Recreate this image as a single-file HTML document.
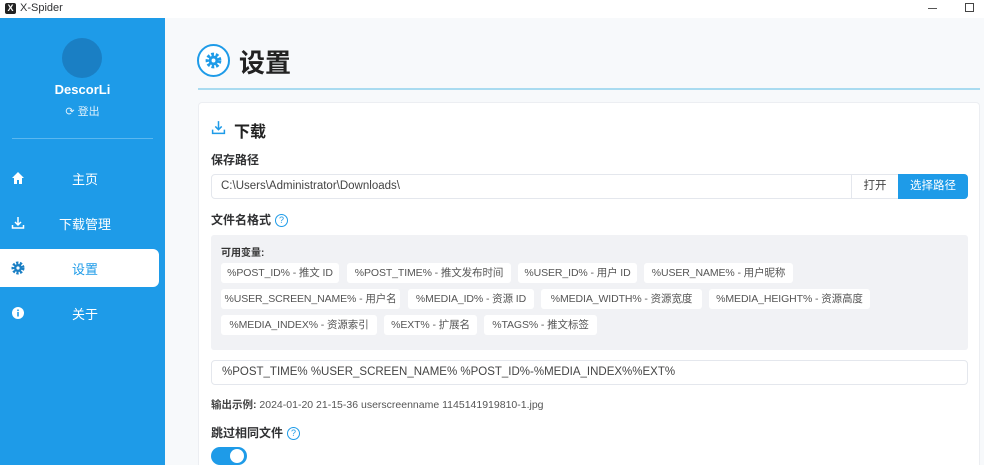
<!DOCTYPE html>
<html style="overflow:hidden;height:465px"><head><meta charset="utf-8"><style>
*{box-sizing:border-box;margin:0;padding:0}
body{width:984px;height:465px;overflow:hidden;background:#f7f9fb;font-family:"Liberation Sans","Noto Sans CJK SC",sans-serif;position:relative;color:#303133}
.abs{position:absolute}
.tb{left:0;top:0;width:984px;height:18px;background:#fff;font-size:11px}
.sb{left:0;top:18px;width:165px;height:447px;background:#1e9be8;color:#fff}
.nav{position:absolute;left:0;width:159px;height:38px;font-size:13px;display:flex;align-items:center}
.nav span{position:absolute;left:0;width:170px;text-align:center}
.nav svg{position:absolute;left:11px}
.tag{position:absolute;height:20px;background:#fff;border-radius:3px;font-size:10.5px;color:#555;line-height:20px;text-align:center;white-space:nowrap;overflow:hidden;letter-spacing:-0.1px}
.lbl{position:absolute;font-size:12px;font-weight:bold;color:#303133}
.q{display:inline-block;width:13px;height:13px;border:1.3px solid #1e9be8;border-radius:50%;color:#1e9be8;font-size:9px;line-height:11px;text-align:center;font-weight:normal;vertical-align:1px;margin-left:4px}
</style></head><body>
<div class="abs tb"><div class="abs" style="left:5px;top:3px;width:11px;height:11px;background:#222;border-radius:2px;color:#fff;font-size:9px;line-height:11px;text-align:center;font-weight:bold">X</div><div class="abs" style="left:20px;top:2px">X-Spider</div>
<div class="abs" style="left:928px;top:8px;width:9px;height:1px;background:#555"></div>
<div class="abs" style="left:965px;top:3px;width:9px;height:9px;border:1.3px solid #444"></div></div>
<div class="abs sb">
<div class="abs" style="left:62px;top:20px;width:40px;height:40px;border-radius:50%;background:#1a7fc4"></div>
<div class="abs" style="left:0;width:165px;top:64px;text-align:center;font-weight:bold;font-size:13px">DescorLi</div>
<div class="abs" style="left:0;width:165px;top:85px;text-align:center;font-size:11px;color:#dff0fc">⟳ 登出</div>
<div class="abs" style="left:12px;top:120px;width:141px;height:1px;background:#5bb7ef"></div>
<div class="nav" style="top:141px"><svg width="14" height="14" viewBox="0 0 14 14"><path d="M7 1L1 7h2v6h3V9h2v4h3V7h2z" fill="#fff"/></svg><span>主页</span></div>
<div class="nav" style="top:186px"><svg width="14" height="14" viewBox="0 0 14 14" fill="none" stroke="#fff" stroke-width="1.5"><path d="M7 1v8M4 6l3 3 3-3M1.5 9v3h11V9"/></svg><span>下载管理</span></div>
<div class="nav" style="top:231px;background:#fff;border-radius:0 6px 6px 0;color:#1e9be8"><svg width="14" height="14" viewBox="0 0 14 14"><circle cx="7" cy="7" r="5" fill="none" stroke="#1a7fc4" stroke-width="3" stroke-dasharray="2.2 1.4"/><circle cx="7" cy="7" r="4" fill="#1a7fc4"/><circle cx="7" cy="7" r="1.6" fill="#fff"/></svg><span>设置</span></div>
<div class="nav" style="top:276px"><svg width="14" height="14" viewBox="0 0 14 14"><circle cx="7" cy="7" r="6" fill="#fff"/><rect x="6.2" y="6" width="1.6" height="4.5" fill="#1e9be8"/><rect x="6.2" y="3.5" width="1.6" height="1.6" fill="#1e9be8"/></svg><span>关于</span></div>
</div>
<div class="abs" style="left:197px;top:44px;width:33px;height:33px;border:2px solid #1e9be8;border-radius:50%;background:#fff"></div>
<svg class="abs" style="left:205px;top:52px" width="17" height="17" viewBox="0 0 14 14"><circle cx="7" cy="7" r="5" fill="none" stroke="#1e9be8" stroke-width="3" stroke-dasharray="2.2 1.4"/><circle cx="7" cy="7" r="4" fill="#1e9be8"/><circle cx="7" cy="7" r="1.6" fill="#fff"/></svg>
<div class="abs" style="left:239px;top:43px;font-size:26px;font-weight:bold;color:#222">设置</div>
<div class="abs" style="left:198px;top:88px;width:782px;height:1.5px;background:#a9dbf0"></div>
<div class="abs" style="left:198px;top:102px;width:782px;height:363px;background:#fff;border:1px solid #eceef2;border-bottom:none;border-radius:4px 4px 0 0"></div>
<svg class="abs" style="left:211px;top:120px" width="15" height="15" viewBox="0 0 14 14" fill="none" stroke="#1e9be8" stroke-width="1.4"><path d="M7 1v8M4 6l3 3 3-3M1.5 9v3.5h11V9"/></svg>
<div class="abs" style="left:234px;top:118px;font-size:16px;font-weight:bold;color:#222">下载</div>
<div class="lbl" style="left:211px;top:151px">保存路径</div>
<div class="abs" style="left:211px;top:174px;width:757px;height:25px;border:1px solid #e4e7ed;border-radius:4px;font-size:11.5px;color:#444;line-height:23px;padding-left:9px">C:\Users\Administrator\Downloads\</div>
<div class="abs" style="left:851px;top:174px;width:48px;height:25px;border:1px solid #e4e7ed;background:#fff;font-size:11.5px;line-height:23px;text-align:center;color:#444">打开</div>
<div class="abs" style="left:898px;top:174px;width:70px;height:25px;background:#1e9be8;border-radius:0 4px 4px 0;font-size:11.5px;line-height:25px;text-align:center;color:#fff">选择路径</div>
<div class="lbl" style="left:211px;top:211px">文件名格式<span class="q">?</span></div>
<div class="abs" style="left:211px;top:235px;width:757px;height:115px;background:#f1f2f5;border-radius:3px"></div>
<div class="abs" style="left:221px;top:244px;font-size:10px;font-weight:bold;color:#333">可用变量:</div>
<div class="tag" style="left:221px;top:263px;width:118px">%POST_ID% - 推文 ID</div>
<div class="tag" style="left:347px;top:263px;width:164px">%POST_TIME% - 推文发布时间</div>
<div class="tag" style="left:518px;top:263px;width:119px">%USER_ID% - 用户 ID</div>
<div class="tag" style="left:644px;top:263px;width:149px">%USER_NAME% - 用户昵称</div>
<div class="tag" style="left:221px;top:289px;width:179px">%USER_SCREEN_NAME% - 用户名</div>
<div class="tag" style="left:408px;top:289px;width:126px">%MEDIA_ID% - 资源 ID</div>
<div class="tag" style="left:541px;top:289px;width:161px">%MEDIA_WIDTH% - 资源宽度</div>
<div class="tag" style="left:709px;top:289px;width:161px">%MEDIA_HEIGHT% - 资源高度</div>
<div class="tag" style="left:221px;top:315px;width:156px">%MEDIA_INDEX% - 资源索引</div>
<div class="tag" style="left:384px;top:315px;width:93px">%EXT% - 扩展名</div>
<div class="tag" style="left:484px;top:315px;width:113px">%TAGS% - 推文标签</div>
<div class="abs" style="left:211px;top:360px;width:757px;height:25px;border:1px solid #e4e7ed;border-radius:4px;font-size:11.5px;color:#444;line-height:23px;padding-left:10px">%POST_TIME% %USER_SCREEN_NAME% %POST_ID%-%MEDIA_INDEX%%EXT%</div>
<div class="abs" style="left:211px;top:397px;font-size:10.5px;color:#555"><b style="color:#444">输出示例:</b> 2024-01-20 21-15-36 userscreenname 1145141919810-1.jpg</div>
<div class="lbl" style="left:211px;top:424px">跳过相同文件<span class="q">?</span></div>
<div class="abs" style="left:211px;top:447px;width:36px;height:18px;border-radius:9px;background:#1e9be8"></div>
<div class="abs" style="left:230px;top:449px;width:14px;height:14px;border-radius:50%;background:#fff"></div>
</body></html>
